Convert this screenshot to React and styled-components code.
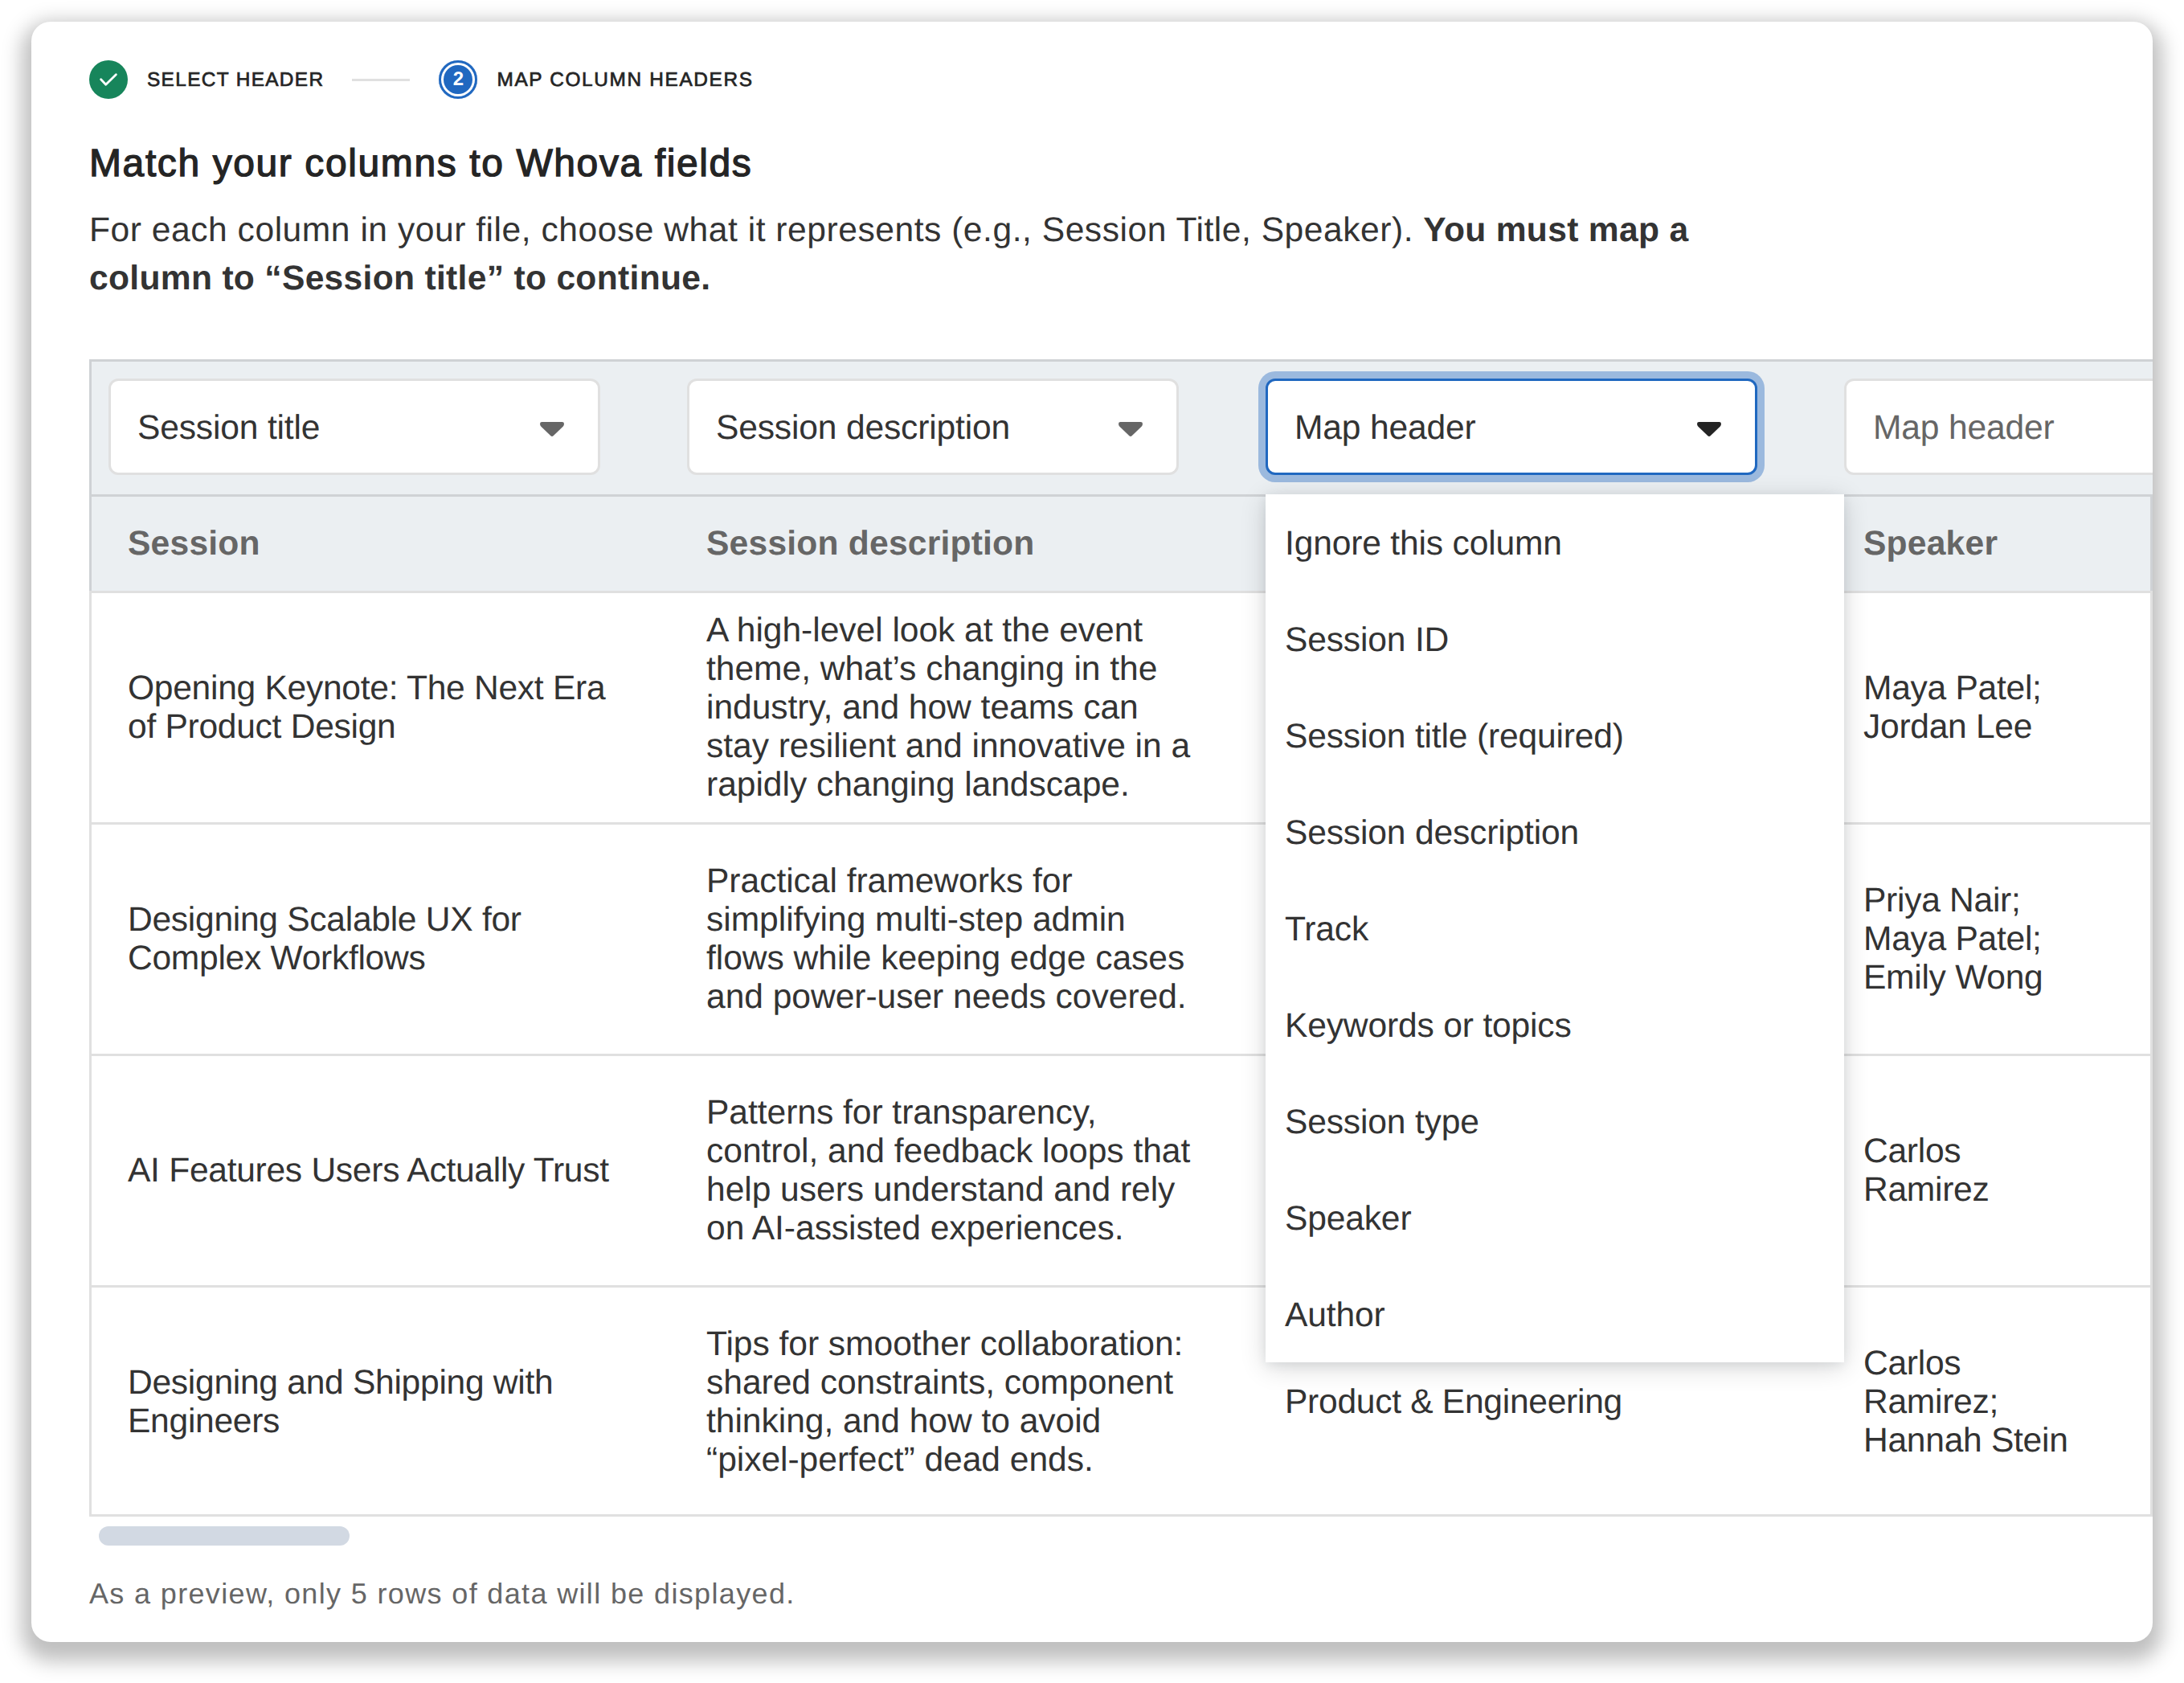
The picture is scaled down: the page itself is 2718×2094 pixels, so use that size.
import React from "react";
import styled, { createGlobalStyle } from "styled-components";

const GlobalStyle = createGlobalStyle`
  *, *::before, *::after { box-sizing: border-box; }
  html, body { margin: 0; background: #fff; overflow: hidden; }
  body {
    font-family: "Liberation Sans", Arial, Helvetica, sans-serif;
    font-size: 42.6px;
    line-height: 48px;
    letter-spacing: -0.18px;
    text-rendering: geometricPrecision;
    color: #333;
  }
`;

const Page = styled.div`
  width: 2718px;
  height: 2094px;
  padding: 27px 39px 51px;
  overflow: hidden;
`;

const Card = styled.main`
  display: flex;
  flex-direction: column;
  width: 2640px;
  height: 2016px;
  padding: 48px 0 0 72px;
  border-radius: 24px;
  background: #fff;
  box-shadow: 0 12px 24px 12px rgba(0, 0, 0, 0.25);
`;

const Stepper = styled.ol`
  display: flex;
  align-items: center;
  height: 48px;
  margin: 0;
  padding: 0;
  list-style: none;
`;

const Step = styled.li`
  display: flex;
  align-items: center;
  gap: 24px;
`;

const StepBadge = styled.span`
  display: flex;
  align-items: center;
  justify-content: center;
  width: 48px;
  height: 48px;
  border-radius: 50%;
  background: ${(p) => (p.$done ? "#17855b" : "#2068c0")};
  box-shadow: ${(p) => (p.$done ? "none" : "inset 0 0 0 3px #2068c0, inset 0 0 0 6px #fff")};
  color: #fff;
  font-size: 24px;
  font-weight: 700;
  line-height: 50px;
`;

const StepLabel = styled.span`
  padding-top: 2px;
  color: #242424;
  font-size: 24.4px;
  line-height: 48px;
  letter-spacing: ${(p) => (p.$current ? "1.65px" : "1.35px")};
  text-transform: uppercase;
  -webkit-text-stroke: 0.7px #242424;
`;

const StepLine = styled.li`
  width: 72px;
  height: 3px;
  margin: 0 36px 0 35px;
  background: #e0e0e0;
`;

const Title = styled.h1`
  margin: 51px 0 0;
  color: #242424;
  font-size: 48px;
  font-weight: 400;
  line-height: 60px;
  letter-spacing: 1.6px;
  -webkit-text-stroke: 1.3px #242424;
`;

const Intro = styled.p`
  width: 2110px;
  margin: 22px 0 0;
  line-height: 60px;
  letter-spacing: 0.52px;

  strong {
    letter-spacing: 0.3px;
  }
`;

const TableFrame = styled.section`
  display: flex;
  flex-direction: column;
  margin-top: 71px;
`;

const SelectRow = styled.div`
  display: flex;
  height: 171px;
  padding: 21px 0 0 21px;
  gap: 108px;
  overflow: hidden;
  border: 3px solid #cfd2d5;
  border-right: 0;
  background: #ebeff2;
`;

const SelectBox = styled.div`
  display: flex;
  flex: none;
  align-items: center;
  justify-content: space-between;
  width: 612px;
  height: 120px;
  padding: 1px 42px 0 33px;
  border: 3px solid ${(p) => (p.$focused ? "#2068c0" : "#e0e0e0")};
  border-radius: 12px;
  background: #fff;
  box-shadow: ${(p) => (p.$focused ? "0 0 0 9px #9bb9de" : "none")};
  color: ${(p) => (p.$placeholder ? "#666" : "#333")};
`;

const Caret = styled.svg`
  display: block;
  width: 30px;
  height: 18px;
  margin-top: 5px;
  fill: ${(p) => (p.$focused ? "#242424" : "#666")};
`;

const ROW_COLUMNS = "765px 720px 720px 1fr";

const HeadRow = styled.div`
  display: grid;
  grid-template-columns: ${ROW_COLUMNS};
  height: 117px;
  border-left: 3px solid #cfd2d5;
  border-right: 3px solid #cfd2d5;
  background: #ebeff2;
  color: #666;
  font-weight: 700;
  line-height: 117px;
  letter-spacing: 0.2px;
`;

const HeadCell = styled.div`
  padding-left: ${(p) => (p.$first ? "45px" : "0")};
`;

const BodyRow = styled.div`
  display: grid;
  grid-template-columns: ${ROW_COLUMNS};
  align-items: center;
  height: 288px;
  padding: ${(p) => (p.$last ? "2px 0 0" : "0 0 2px")};
  border: 3px solid #e0e0e0;
  border-bottom-width: ${(p) => (p.$last ? "3px" : "0")};
`;

const Cell = styled.div`
  padding-left: ${(p) => (p.$first ? "45px" : "0")};
  letter-spacing: ${(p) => (p.$wide ? "-0.05px" : "-0.3px")};
  white-space: pre-line;
`;

const MenuAnchor = styled.div`
  position: relative;
  height: 0;
`;

const Menu = styled.ul`
  position: absolute;
  top: -3px;
  left: 1464px;
  width: 720px;
  margin: 0;
  padding: 0;
  list-style: none;
  background: #fff;
  box-shadow: 0 6px 30px rgba(0, 0, 0, 0.16), 0 3px 12px rgba(40, 60, 90, 0.08);
`;

const MenuItem = styled.li`
  height: 120px;
  padding: 1px 0 0 24px;
  line-height: 120px;
`;

const ScrollThumb = styled.div`
  width: 312px;
  height: 24px;
  margin: 12px 0 0 12px;
  border-radius: 12px;
  background: #d2d9e3;
`;

const Footnote = styled.p`
  margin: 36px 0 0;
  color: #666;
  font-size: 36px;
  line-height: 48px;
  letter-spacing: 1.35px;
`;

const selects = [
  { label: "Session title" },
  { label: "Session description" },
  { label: "Map header", focused: true },
  { label: "Map header", placeholder: true },
];

const headings = ["Session", "Session description", "", "Speaker"];

const rows = [
  [
    "Opening Keynote: The Next Era\nof Product Design",
    "A high-level look at the event\ntheme, what’s changing in the\nindustry, and how teams can\nstay resilient and innovative in a\nrapidly changing landscape.",
    "",
    "Maya Patel;\nJordan Lee",
  ],
  [
    "Designing Scalable UX for\nComplex Workflows",
    "Practical frameworks for\nsimplifying multi-step admin\nflows while keeping edge cases\nand power-user needs covered.",
    "",
    "Priya Nair;\nMaya Patel;\nEmily Wong",
  ],
  [
    "AI Features Users Actually Trust",
    "Patterns for transparency,\ncontrol, and feedback loops that\nhelp users understand and rely\non AI-assisted experiences.",
    "",
    "Carlos\nRamirez",
  ],
  [
    "Designing and Shipping with\nEngineers",
    "Tips for smoother collaboration:\nshared constraints, component\nthinking, and how to avoid\n“pixel-perfect” dead ends.",
    "Product & Engineering",
    "Carlos\nRamirez;\nHannah Stein",
  ],
];

const options = [
  "Ignore this column",
  "Session ID",
  "Session title (required)",
  "Session description",
  "Track",
  "Keywords or topics",
  "Session type",
  "Speaker",
  "Author",
];

function CheckIcon() {
  return (
    <svg width="24" height="24" viewBox="0 0 24 24" fill="none" stroke="#fff" strokeWidth="2.8" strokeLinecap="round" strokeLinejoin="round">
      <path d="M2.6 11.8 L8.7 18.2 L21.4 5.7" />
    </svg>
  );
}

function Select({ label, focused, placeholder }) {
  return (
    <SelectBox $focused={focused} $placeholder={placeholder}>
      <span>{label}</span>
      <Caret $focused={focused} viewBox="0 0 30 18">
        <path d="M2.4 0 H27.6 Q30 0 30 2.4 Q30 4.4 28.6 5.8 L16.6 17.3 Q15 18.6 13.4 17.3 L1.4 5.8 Q0 4.4 0 2.4 Q0 0 2.4 0 Z" />
      </Caret>
    </SelectBox>
  );
}

export default function App() {
  return (
    <>
      <GlobalStyle />
      <Page>
        <Card>
          <Stepper>
            <Step>
              <StepBadge $done>
                <CheckIcon />
              </StepBadge>
              <StepLabel>Select header</StepLabel>
            </Step>
            <StepLine />
            <Step>
              <StepBadge>2</StepBadge>
              <StepLabel $current>Map column headers</StepLabel>
            </Step>
          </Stepper>
          <Title>Match your columns to Whova fields</Title>
          <Intro>
            For each column in your file, choose what it represents (e.g., Session Title, Speaker).{" "}
            <strong>
              You must map a<br />
              column to “Session title” to continue.
            </strong>
          </Intro>
          <TableFrame>
            <SelectRow>
              {selects.map((s, i) => (
                <Select key={i} {...s} />
              ))}
            </SelectRow>
            <MenuAnchor>
              <Menu>
                {options.map((o) => (
                  <MenuItem key={o}>{o}</MenuItem>
                ))}
              </Menu>
            </MenuAnchor>
            <HeadRow>
              {headings.map((h, i) => (
                <HeadCell key={i} $first={i === 0}>
                  {h}
                </HeadCell>
              ))}
            </HeadRow>
            {rows.map((row, r) => (
              <BodyRow key={r} $last={r === rows.length - 1}>
                {row.map((text, i) => (
                  <Cell key={i} $first={i === 0} $wide={i === 1}>
                    {text}
                  </Cell>
                ))}
              </BodyRow>
            ))}
          </TableFrame>
          <ScrollThumb />
          <Footnote>As a preview, only 5 rows of data will be displayed.</Footnote>
        </Card>
      </Page>
    </>
  );
}
